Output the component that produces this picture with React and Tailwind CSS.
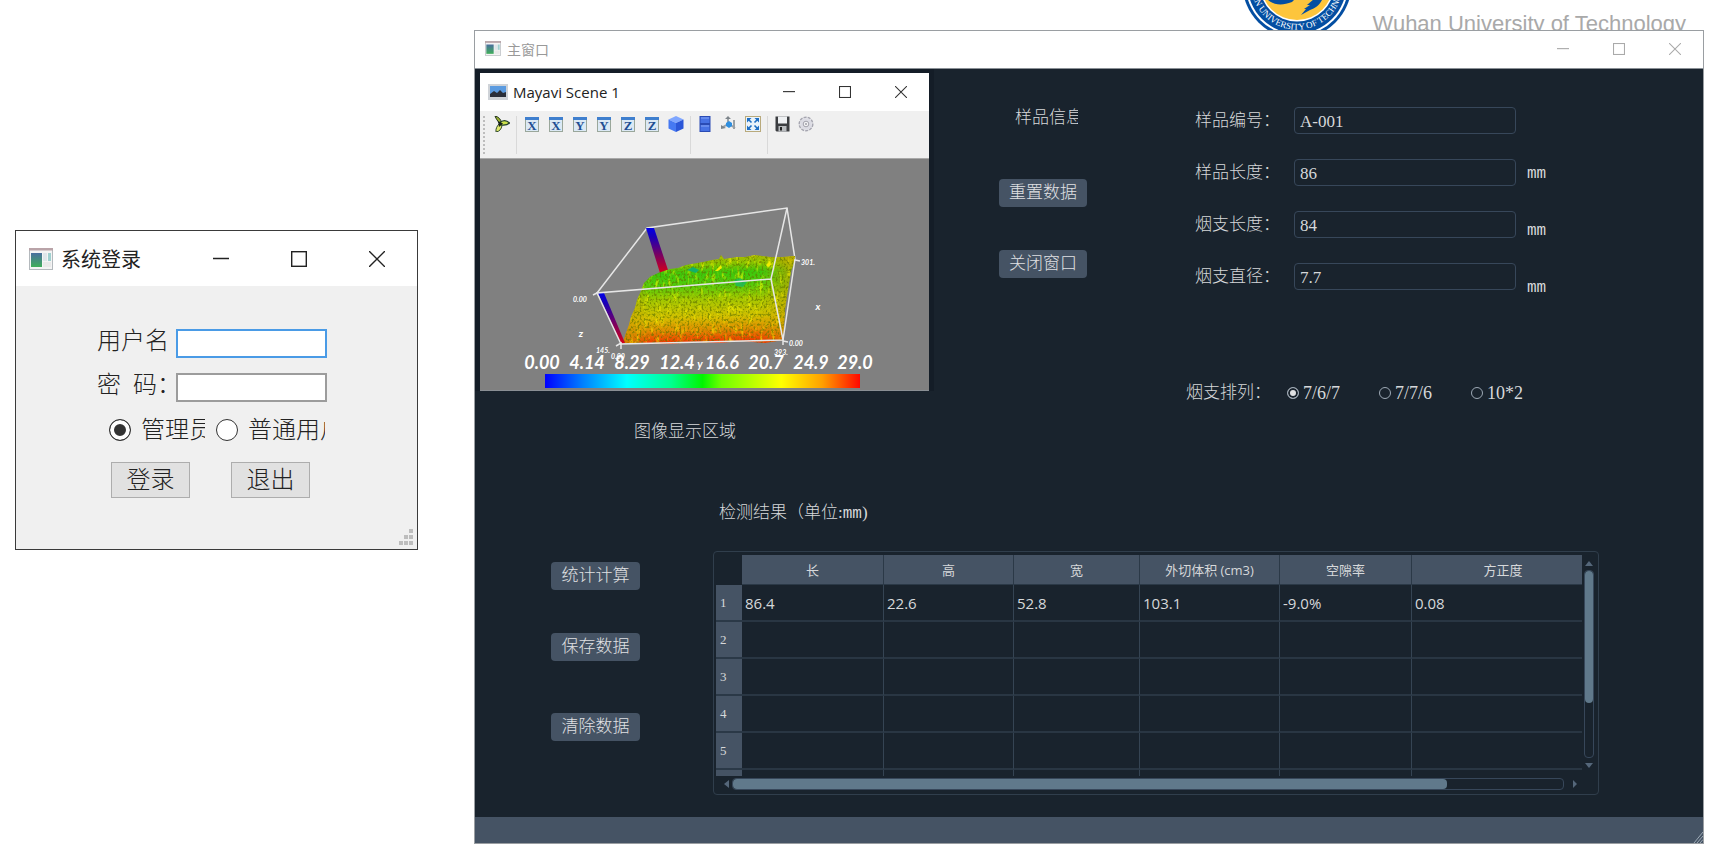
import React from "react";

const CJK = "font-['Liberation_Serif','Noto_Sans_CJK_SC',serif]";

function AppIcon({ className }) {
  return (
    <svg viewBox="0 0 24 22" className={className} aria-hidden="true">
      <defs>
        <linearGradient id="appg" x1="0" y1="0" x2="0" y2="1">
          <stop offset="0" stopColor="#4a6f9e" />
          <stop offset="1" stopColor="#3fae5a" />
        </linearGradient>
      </defs>
      <rect x="0.5" y="0.5" width="23" height="21" fill="#f4f4f4" stroke="#b4b9bd" />
      <rect x="0" y="0" width="24" height="2.5" fill="#b9a3a8" />
      <rect x="2" y="5" width="11" height="14" fill="url(#appg)" />
      <rect x="14" y="5" width="4" height="8" fill="#dfe6ea" />
      <rect x="19" y="5" width="3" height="8" fill="#9fd0cf" />
      <rect x="14" y="14" width="8" height="5" fill="#e9e9e9" />
    </svg>
  );
}

function CaptionButtons({ size, className, gap }) {
  return (
    <div className={`flex items-center ${gap} ${className}`}>
      <button type="button" aria-label="最小化">
        <svg viewBox="0 0 16 16" className={size} fill="none" stroke="currentColor" strokeWidth="1.5">
          <path d="M0 7.5H16" />
        </svg>
      </button>
      <button type="button" aria-label="最大化">
        <svg viewBox="0 0 16 16" className={size} fill="none" stroke="currentColor" strokeWidth="1.4">
          <rect x="0.7" y="0.7" width="14.6" height="14.6" />
        </svg>
      </button>
      <button type="button" aria-label="关闭">
        <svg viewBox="0 0 16 16" className={size} fill="none" stroke="currentColor" strokeWidth="1.4">
          <path d="M0 0L16 16M16 0L0 16" />
        </svg>
      </button>
    </div>
  );
}

function LoginRadio({ label, checked, width }) {
  return (
    <label className="flex items-center gap-[10px]">
      <input
        type="radio"
        name="role"
        defaultChecked={checked}
        className="size-[22px] shrink-0 appearance-none rounded-full border border-[#333] bg-white checked:bg-[#333] checked:shadow-[inset_0_0_0_4px_#fff]"
      />
      <span className={`overflow-hidden whitespace-nowrap ${width}`}>{label}</span>
    </label>
  );
}

function LoginWindow() {
  return (
    <section className="mt-[230px] w-[403px] shrink-0 border border-[#3a3a3a] bg-[#f0f0f0]">
      <header className="flex h-[55px] items-center bg-white pl-[13px] pr-8">
        <AppIcon className="h-[22px] w-6" />
        <h1 className="ml-2 text-[20px] leading-6 text-[#222] font-['Noto_Sans_CJK_SC',sans-serif]">系统登录</h1>
        <CaptionButtons size="size-4" gap="gap-[62px]" className="ml-auto text-[#222]" />
      </header>
      <form className={`flex flex-col pl-[81px] text-[24px] font-light leading-7 text-[#222] ${CJK}`}>
        <div className="mt-[41px] flex items-start">
          <label htmlFor="user" className="w-[70px] overflow-hidden whitespace-nowrap">用户名：</label>
          <input id="user" className="mt-[2px] ml-[9px] h-[29px] w-[151px] border-2 border-[#4a9be6] bg-white px-1 text-base outline-none" />
        </div>
        <div className="mt-[13px] flex items-start">
          <label htmlFor="pass" className="w-[70px] overflow-hidden whitespace-nowrap">
            密<span className="ml-3">码：</span>
          </label>
          <input id="pass" type="password" className="mt-[2px] ml-[9px] h-[29px] w-[151px] border-2 border-[#9c9c9c] bg-white px-1 text-base outline-none" />
        </div>
        <div className="mt-[14px] flex gap-[11px] pl-3">
          <LoginRadio label="管理员" checked width="w-[64px]" />
          <LoginRadio label="普通用户" width="w-[77px]" />
        </div>
        <div className="mt-[18px] mb-[31px] flex gap-[41px] pl-[14px]">
          <button type="button" className="h-9 w-[79px] border border-[#adadad] bg-[#e1e1e1]">登录</button>
          <button type="button" className="h-9 w-[79px] border border-[#adadad] bg-[#e1e1e1]">退出</button>
        </div>
      </form>
      <div className="flex justify-end pr-[3px] pb-[3px]">
        <svg viewBox="0 0 15 17" className="h-[17px] w-[15px]" fill="#bdbdbd" aria-hidden="true">
          <rect x="10" y="0" width="4" height="4" />
          <rect x="5" y="6" width="4" height="4" />
          <rect x="10" y="6" width="4" height="4" />
          <rect x="0" y="12" width="4" height="4" />
          <rect x="5" y="12" width="4" height="4" />
          <rect x="10" y="12" width="4" height="4" />
        </svg>
      </div>
    </section>
  );
}

function Banner() {
  return (
    <div className="flex h-[30px] items-start justify-end overflow-hidden pr-[18px]">
      <svg viewBox="0 0 110 40" className="h-10 w-[110px] shrink-0" role="img" aria-label="University crest">
        <circle cx="55" cy="-16" r="54.5" fill="#034ea2" />
        <circle cx="55" cy="-16" r="51.5" fill="#fff" />
        <circle cx="55" cy="-16" r="49.5" fill="#034ea2" />
        <circle cx="55" cy="-16" r="37.5" fill="#fff" />
        <circle cx="55" cy="-16" r="36" fill="#fdc53c" />
        <path d="M26 0c6 5 14 6 24 2l3-3H24z" fill="#034ea2" />
        <path d="M80 0c-3 6-7 8-12 10l-9 5 5-6-2 0 6-4-3 0 7-6z" fill="#034ea2" />
        <path id="crestArc" d="M9.2 -16A45.8 45.8 0 0 0 100.8 -16" fill="none" />
        <text fontSize="9" fill="#fff" fontFamily="Liberation Serif, serif" textAnchor="middle">
          <textPath href="#crestArc" startOffset="51%">WUHAN UNIVERSITY OF TECHNOLOGY</textPath>
        </text>
      </svg>
      <p className="ml-[21px] mt-[12px] whitespace-nowrap text-[22px] leading-6 text-[#a9a9a9] font-['Liberation_Sans',sans-serif]">
        Wuhan University of Technology
      </p>
    </div>
  );
}

function AxisIcon({ letter }) {
  return (
    <svg viewBox="0 0 14 15" className="h-[15px] w-[14px]">
      <rect x="0.5" y="0.5" width="13" height="14" fill="#dbe9f5" stroke="#9aa79b" />
      <rect x="0" y="0" width="14" height="3" fill="#3f7fce" />
      <text x="7" y="13" textAnchor="middle" fontSize="13" fontWeight="700" fill="#1f4f93" fontFamily="Liberation Serif, serif">
        {letter}
      </text>
    </svg>
  );
}

function ToolButton({ label, children }) {
  return (
    <button type="button" aria-label={label} className="flex h-4 w-6 items-center justify-center">
      {children}
    </button>
  );
}

const AXES = ["X", "X", "Y", "Y", "Z", "Z"];

function Toolbar() {
  return (
    <div className="flex h-12 items-start border-b border-[#a9a9a9] bg-[#f0f0f0] pt-[5px]">
      <div className="ml-[3px] h-[38px] border-l-2 border-dotted border-[#bdbdbd]" />
      <div className="ml-[5px]">
        <ToolButton label="场景">
          <svg viewBox="0 0 16 16" className="size-4">
            <path d="M1 0C5 1 7 3.5 7.500 7L5 7C4 5 2 3 1 0Z" fill="#9db32f" stroke="#20321a" strokeWidth="1" />
            <path d="M6.500 6C9.500 4 13 4.500 15.500 7C13 9.500 10 9.500 6.500 9Z" fill="#cbe04a" stroke="#22402a" strokeWidth="1.2" />
            <path d="M5 8L8 9.500C7.500 13 5.500 15.500 2 16C1.500 13 3 10 5 8Z" fill="#dfe86a" stroke="#2f4a2c" strokeWidth="1" />
            <path d="M4 5L9 7.5L5 11Z" fill="#142018" />
          </svg>
        </ToolButton>
      </div>
      <div className="ml-[2px] h-[38px] w-px bg-[#d9d9d9]" />
      <div className="ml-[3px] flex">
        {AXES.map((a, i) => (
          <ToolButton key={i} label={`${a} 轴视图 ${(i % 2) + 1}`}>
            <AxisIcon letter={a} />
          </ToolButton>
        ))}
        <ToolButton label="等轴视图">
          <svg viewBox="0 0 16 16" className="size-4">
            <path d="M8 0L15.5 3.5L8 7L0.5 3.5Z" fill="#7fa6ff" />
            <path d="M0.5 3.5L8 7V16L0.5 12.5Z" fill="#4679f2" />
            <path d="M15.5 3.5L8 7V16L15.5 12.5Z" fill="#2c57d8" />
          </svg>
        </ToolButton>
      </div>
      <div className="ml-[2px] h-[38px] w-px bg-[#d9d9d9]" />
      <div className="ml-[2px] flex">
        <ToolButton label="平行投影">
          <svg viewBox="0 0 12 16" className="h-4 w-3">
            <rect x="1" y="0.5" width="10" height="7" fill="#4772e4" stroke="#2a4bb4" />
            <rect x="1" y="8.5" width="10" height="7" fill="#4772e4" stroke="#2a4bb4" />
            <path d="M2 2H10M2 10H10" stroke="#86a4f5" />
          </svg>
        </ToolButton>
        <ToolButton label="坐标轴">
          <svg viewBox="0 0 16 16" className="size-4">
            <path d="M7 1V8L2 11M8 8L14 12M13 13V4" fill="none" stroke="#9aa1a6" strokeWidth="2" />
            <path d="M0 9V13L5 12ZM4 3L7 0L10 3Z" fill="#7d858b" />
            <path d="M8 5L11 7V10L8 12L5 10V7Z" fill="#2f8fe0" />
          </svg>
        </ToolButton>
        <ToolButton label="全屏">
          <svg viewBox="0 0 16 16" className="size-4">
            <rect x="0.5" y="0.5" width="15" height="15" fill="#eaf3fb" stroke="#b9aa7c" />
            <path d="M2 2H6.5L2 6.5ZM14 2H9.5L14 6.5ZM2 14H6.5L2 9.500ZM14 14H9.5L14 9.5Z" fill="#1f6fc4" />
            <path d="M3 3L6.500 6.500M13 3L9.500 6.500M3 13L6.500 9.500M13 13L9.500 9.500" stroke="#1f6fc4" strokeWidth="1.600" />
          </svg>
        </ToolButton>
      </div>
      <div className="ml-[2px] h-[38px] w-px bg-[#d9d9d9]" />
      <div className="ml-[2px] flex">
        <ToolButton label="保存">
          <svg viewBox="0 0 15 16" className="h-4 w-[15px]">
            <path d="M0.500 0.500H14.500V15.500H1.500L0.500 14.500Z" fill="#3b3d40" />
            <rect x="3" y="0.500" width="9" height="7" fill="#eef0f2" />
            <rect x="3.500" y="10" width="8" height="5.500" fill="#b9bcbf" />
            <rect x="5" y="11" width="2" height="3.500" fill="#222" />
          </svg>
        </ToolButton>
        <ToolButton label="设置">
          <svg viewBox="0 0 16 16" className="size-4">
            <circle cx="8" cy="8" r="6.800" fill="#e2e2e8" stroke="#a6a6b0" strokeWidth="1.400" strokeDasharray="3 1.200" />
            <circle cx="8" cy="8" r="5.500" fill="#dcdce4" />
            <circle cx="8" cy="8" r="2.800" fill="#f2f2f4" stroke="#a3a3ad" strokeWidth="1" />
            <circle cx="8" cy="8" r="1" fill="#a0a0aa" />
          </svg>
        </ToolButton>
      </div>
    </div>
  );
}

const SCALE = [
  ["0.00", 62],
  ["4.14", 107],
  ["8.29", 152],
  ["12.4", 197],
  ["16.6", 242],
  ["20.7", 286],
  ["24.9", 331],
  ["29.0", 375],
];

const SMALL = [
  ["0.00", 100, 143],
  ["145.", 123, 194],
  ["0.00", 138, 200],
  ["393.", 301, 196],
  ["0.00", 316, 187],
  ["301.", 328, 106],
];

const SURFACE =
  "M143 184L146 174L149 166L151 158L155 149L157 141L161 132L164 124L170 118L178 114L190 110L198 109L206 106L223 103L232 101L239 100L241 96L244 100L257 98L265 98L275 96L290 98L303 98L315 97L314 104L311 112L309 124L307 136L305 150L304 166L303 181L285 184L262 182L240 184L215 183L190 185Z";

function Scene() {
  return (
    <svg viewBox="0 0 449 231" className="block h-auto w-full bg-[#808080]" role="img" aria-label="三维表面图">
      <defs>
        <linearGradient id="surf" x1="0" y1="0" x2="0.050" y2="1">
          <stop offset="0" stopColor="#bcb800" />
          <stop offset="0.130" stopColor="#86c400" />
          <stop offset="0.220" stopColor="#3cc80c" />
          <stop offset="0.360" stopColor="#52cc0a" />
          <stop offset="0.520" stopColor="#a3c800" />
          <stop offset="0.720" stopColor="#d4c000" />
          <stop offset="0.860" stopColor="#e08c00" />
          <stop offset="1" stopColor="#f23400" />
        </linearGradient>
        <linearGradient id="side" x1="0" y1="0" x2="1" y2="0">
          <stop offset="0" stopColor="#d09a00" stopOpacity="0.800" />
          <stop offset="0.150" stopColor="#c0a000" stopOpacity="0" />
          <stop offset="0.800" stopColor="#c0a000" stopOpacity="0" />
          <stop offset="1" stopColor="#c8a400" stopOpacity="0.800" />
        </linearGradient>
        <linearGradient id="wall" x1="0" y1="0" x2="0" y2="1">
          <stop offset="0" stopColor="#0000e6" />
          <stop offset="0.200" stopColor="#1a00b8" />
          <stop offset="0.600" stopColor="#7a0060" />
          <stop offset="1" stopColor="#d80018" />
        </linearGradient>
        <linearGradient id="bar" x1="0" y1="0" x2="1" y2="0">
          <stop offset="0" stopColor="#0000ff" />
          <stop offset="0.120" stopColor="#0080ff" />
          <stop offset="0.260" stopColor="#00ffff" />
          <stop offset="0.400" stopColor="#00ff90" />
          <stop offset="0.500" stopColor="#00f500" />
          <stop offset="0.560" stopColor="#70ff00" />
          <stop offset="0.750" stopColor="#ffff00" />
          <stop offset="0.880" stopColor="#ffa000" />
          <stop offset="1" stopColor="#ff0800" />
        </linearGradient>
        <filter id="grain" x="0" y="0" width="1" height="1">
          <feTurbulence type="fractalNoise" baseFrequency="0.500 0.400" numOctaves="2" seed="4" />
          <feColorMatrix values="0 0 0 0 0.120  0 0 0 0 0.180  0 0 0 0 0  4.500 0 0 0 -2.150" />
          <feComposite in2="SourceGraphic" operator="in" />
        </filter>
        <filter id="glint" x="0" y="0" width="1" height="1">
          <feTurbulence type="fractalNoise" baseFrequency="0.250 0.090" numOctaves="2" seed="9" />
          <feColorMatrix values="0 0 0 0 1  0 0 0 0 0.950  0 0 0 0 0  0 4 0 0 -2.200" />
          <feComposite in2="SourceGraphic" operator="in" />
        </filter>
      </defs>
      <path d="M117 134L167 69L307 49L315 100" stroke="#e6e6e6" strokeWidth="1.500" fill="none" />
      <path d="M166 69L174 69L188 111L180 114Z" fill="url(#wall)" />
      <path d={SURFACE} fill="url(#surf)" />
      <path d={SURFACE} fill="url(#side)" />
      <path d={SURFACE} filter="url(#glint)" opacity="0.600" />
      <path d={SURFACE} filter="url(#grain)" opacity="0.650" />
      <path d="M207 111L213 108L219 111L216 114Z" fill="#12b06a" />
      <path d="M254 121L260 119L267 123L263 128L256 127Z" fill="#1cb860" opacity="0.800" />
      <path d="M235 112L241 106L242 109L238 112Z" fill="#f0ee00" />
      <path d="M286 106L290 102L291 106L288 108Z" fill="#f0ee00" />
      <path d="M118 134L124 134L145 184L141 185Z" fill="url(#wall)" />
      <g stroke="#e6e6e6" strokeWidth="1.500" fill="none">
        <path d="M315 100L303 181L141 185L117 134L291 120L307 49M291 120L303 181" />
        <path d="M113 136L119 133M136 187L141 184V190M303 179V186M303 182L308 183M315 101L320 102" />
      </g>
      <g fill="#fff" fontFamily="Lato, sans-serif" fontStyle="italic" textAnchor="middle">
        {SMALL.map(([t, x, y], i) => (
          <text key={i} x={x} y={y} fontSize="7" fontWeight="700">{t}</text>
        ))}
        <text x="338" y="151" fontSize="10" fontWeight="700">x</text>
        <text x="101" y="178" fontSize="10" fontWeight="700">z</text>
        <text x="220" y="209" fontSize="11" fontWeight="700">y</text>
        {SCALE.map(([t, x]) => (
          <text key={t} x={x} y="210" fontSize="18" fontWeight="700">{t}</text>
        ))}
      </g>
      <rect x="65" y="215" width="315" height="14" fill="url(#bar)" />
    </svg>
  );
}

function MayaviWindow() {
  return (
    <div className="w-fit border-x-[5px] border-t-4 border-[#141d27]">
      <section className="w-[449px] border-b border-[#8a8f94]">
        <header className="flex h-[38px] items-center bg-white pl-2 pr-[22px]">
          <svg viewBox="0 0 20 16" className="h-4 w-5" aria-hidden="true">
            <rect width="20" height="16" fill="#cfd3d8" />
            <rect x="2" y="2" width="16" height="11" fill="#5b9be0" />
            <path d="M2 10L6 7L9 9L12 6L15 9L18 8V13H2Z" fill="#2a2f3a" />
          </svg>
          <h2 className="ml-[5px] text-[15px] font-normal leading-5 text-[#222] font-['Open_Sans',sans-serif]">Mayavi Scene 1</h2>
          <CaptionButtons size="size-3" gap="gap-11" className="ml-auto text-[#333]" />
        </header>
        <Toolbar />
        <Scene />
      </section>
    </div>
  );
}

const DARK_BTN =
  "h-7 rounded-[4px] bg-[#455364] text-[17px] font-light leading-7 text-[#e0e1e3]";

const FIELDS = [
  ["f1", "样品编号：", "A-001"],
  ["f2", "样品长度：", "86"],
  ["f3", "烟支长度：", "84"],
  ["f4", "烟支直径：", "7.7"],
];

const LAYOUTS = ["7/6/7", "7/7/6", "10*2"];

function SampleForm() {
  return (
    <div className="ml-[99px] pt-[38px]">
      <div className="flex">
        <div className="flex flex-col gap-[25px]">
          {FIELDS.map(([id, label, value]) => (
            <div key={id} className="flex h-[27px] items-center">
              <label htmlFor={id} className="w-[108px] pl-[9px]">{label}</label>
              <input
                id={id}
                defaultValue={value}
                className="h-[27px] w-[222px] rounded-[4px] border border-[#37475a] bg-transparent px-[5px] pt-[2px] font-normal outline-none"
              />
            </div>
          ))}
        </div>
        <div className="ml-[11px] flex flex-col gap-[33px] pt-[55px] text-[16px] font-['Liberation_Mono',monospace]">
          <span>mm</span>
          <span>mm</span>
          <span>mm</span>
        </div>
      </div>
      <fieldset className="mt-[81px] flex items-center">
        <legend className="sr-only">烟支排列</legend>
        <span className="w-[101px]" aria-hidden="true">烟支排列：</span>
        {LAYOUTS.map((t, i) => (
          <label key={t} className="flex w-[92px] items-center gap-1 text-[18px] font-normal">
            <input
              type="radio"
              name="layout"
              defaultChecked={i === 0}
              className="size-3 appearance-none rounded-full border border-[#9da9b5] checked:bg-[#e0e1e3] checked:shadow-[inset_0_0_0_2px_#19232d]"
            />
            {t}
          </label>
        ))}
      </fieldset>
    </div>
  );
}

const COLUMNS = ["长", "高", "宽", "外切体积 (cm3)", "空隙率", "方正度"];
const ROWS = [
  ["86.4", "22.6", "52.8", "103.1", "-9.0%", "0.08"],
  ["", "", "", "", "", ""],
  ["", "", "", "", "", ""],
  ["", "", "", "", "", ""],
  ["", "", "", "", "", ""],
  ["", "", "", "", "", ""],
];

function Arrow({ d, label }) {
  return (
    <button type="button" aria-label={label} className="shrink-0">
      <svg viewBox="0 0 8 8" className="size-2" fill="#55677a">
        <path d={d} />
      </svg>
    </button>
  );
}

function ResultTable() {
  return (
    <div className="flex min-w-0 flex-1 rounded-[4px] border border-[#303e4c] pt-[3px] pr-1 pb-[2px] pl-[2px]">
      <div className="min-w-0 flex-1">
        <div className="h-[221px] overflow-hidden">
          <table className="w-full table-fixed border-separate border-spacing-0 text-left font-normal font-['Open_Sans','Noto_Sans_CJK_SC',sans-serif]">
            <colgroup>
              <col className="w-[26px]" />
              <col className="w-[142px]" />
              <col className="w-[130px]" />
              <col className="w-[126px]" />
              <col className="w-[140px]" />
              <col className="w-[132px]" />
              <col />
            </colgroup>
            <thead>
              <tr>
                <td />
                {COLUMNS.map((c) => (
                  <th
                    key={c}
                    scope="col"
                    className="h-[30px] border-b border-r border-[#2b3947] bg-[#455364] text-center text-[13px] font-normal leading-5 last:border-r-0 last:pl-3"
                  >
                    {c}
                  </th>
                ))}
              </tr>
            </thead>
            <tbody>
              {ROWS.map((r, i) => (
                <tr key={i}>
                  <th
                    scope="row"
                    className="h-[37px] border-b-2 border-[#2b3947] bg-[#455364] pl-1 text-[13px] font-normal leading-5 font-['Liberation_Serif',serif]"
                  >
                    {i + 1}
                  </th>
                  {r.map((c, j) => (
                    <td key={j} className="h-[37px] border-b-2 border-r border-b-[#293643] border-r-[#354453] pl-[3px] text-[15px] leading-5 last:border-r-0">
                      {c}
                    </td>
                  ))}
                </tr>
              ))}
            </tbody>
          </table>
        </div>
        <div className="flex h-[16px] items-center pl-[6px] pr-[3px]">
          <Arrow label="向左" d="M7 0V8L2 4Z" />
          <div className="mr-[7px] ml-[2px] h-3 flex-1 rounded-[4px] border border-[#37475a]">
            <div className="h-[10px] w-[86%] rounded-[4px] bg-[#60798b]" />
          </div>
          <Arrow label="向右" d="M2 0V8L6 4Z" />
        </div>
      </div>
      <div className="ml-[2px] flex w-[10px] flex-col items-center gap-[3px] pt-1 pb-[23px]">
        <Arrow label="向上" d="M0 7H8L4 2Z" />
        <div className="w-[10px] flex-1 rounded-[4px] border border-[#37475a]">
          <div className="h-[71%] rounded-[4px] bg-[#60798b]" />
        </div>
        <Arrow label="向下" d="M0 2H8L4 7Z" />
      </div>
    </div>
  );
}

function MainWindow() {
  return (
    <section className="border border-[#9a9ea2] bg-[#19232d] text-[#d6d8da]">
      <header className="flex h-[38px] items-center border-b border-[#8a9096] bg-white pl-[10px] pr-[22px] pb-[2px]">
        <AppIcon className="h-[15px] w-4" />
        <h1 className="ml-[6px] text-[14px] leading-5 text-[#999] font-['Noto_Sans_CJK_SC',sans-serif]">主窗口</h1>
        <CaptionButtons size="size-3" gap="gap-11" className="ml-auto text-[#aaa]" />
      </header>
      <div className={`text-[17px] font-light leading-6 ${CJK}`}>
        <div className="flex items-start">
          <div className="w-[459px] shrink-0">
            <MayaviWindow />
            <p className="mt-[29px] pl-[159px]">图像显示区域</p>
          </div>
          <div className="ml-[65px] flex w-[88px] shrink-0 flex-col pt-[37px]">
            <p className="ml-4 w-[63px] overflow-hidden whitespace-nowrap">样品信息</p>
            <button type="button" className={`mt-[49px] ${DARK_BTN}`}>重置数据</button>
            <button type="button" className={`mt-[43px] ${DARK_BTN}`}>关闭窗口</button>
          </div>
          <SampleForm />
        </div>
        <p className="mt-[57px] pl-[244px]">
          检测结果（单位:<span className="text-[16px] font-['Liberation_Mono',monospace]">mm</span>)
        </p>
        <div className="mt-[25px] flex pl-[76px] pr-[104px]">
          <div className="mr-[73px] flex w-[89px] shrink-0 flex-col pt-[11px]">
            <button type="button" className={DARK_BTN}>统计计算</button>
            <button type="button" className={`mt-[43px] ${DARK_BTN}`}>保存数据</button>
            <button type="button" className={`mt-[52px] ${DARK_BTN}`}>清除数据</button>
          </div>
          <ResultTable />
        </div>
      </div>
      <footer className="mt-[22px] flex h-[26px] items-end justify-end bg-[#455364]">
        <svg viewBox="0 0 10 12" className="h-3 w-[10px]" fill="none" stroke="#9da9b5" aria-hidden="true">
          <path d="M1 12L10 1M4 12L10 5M7 12L10 8.500" />
        </svg>
      </footer>
    </section>
  );
}

export default function App() {
  return (
    <main className="flex items-start bg-white pl-[15px] pr-[22px]">
      <LoginWindow />
      <div className="ml-14 min-w-0 flex-1">
        <Banner />
        <MainWindow />
      </div>
    </main>
  );
}
